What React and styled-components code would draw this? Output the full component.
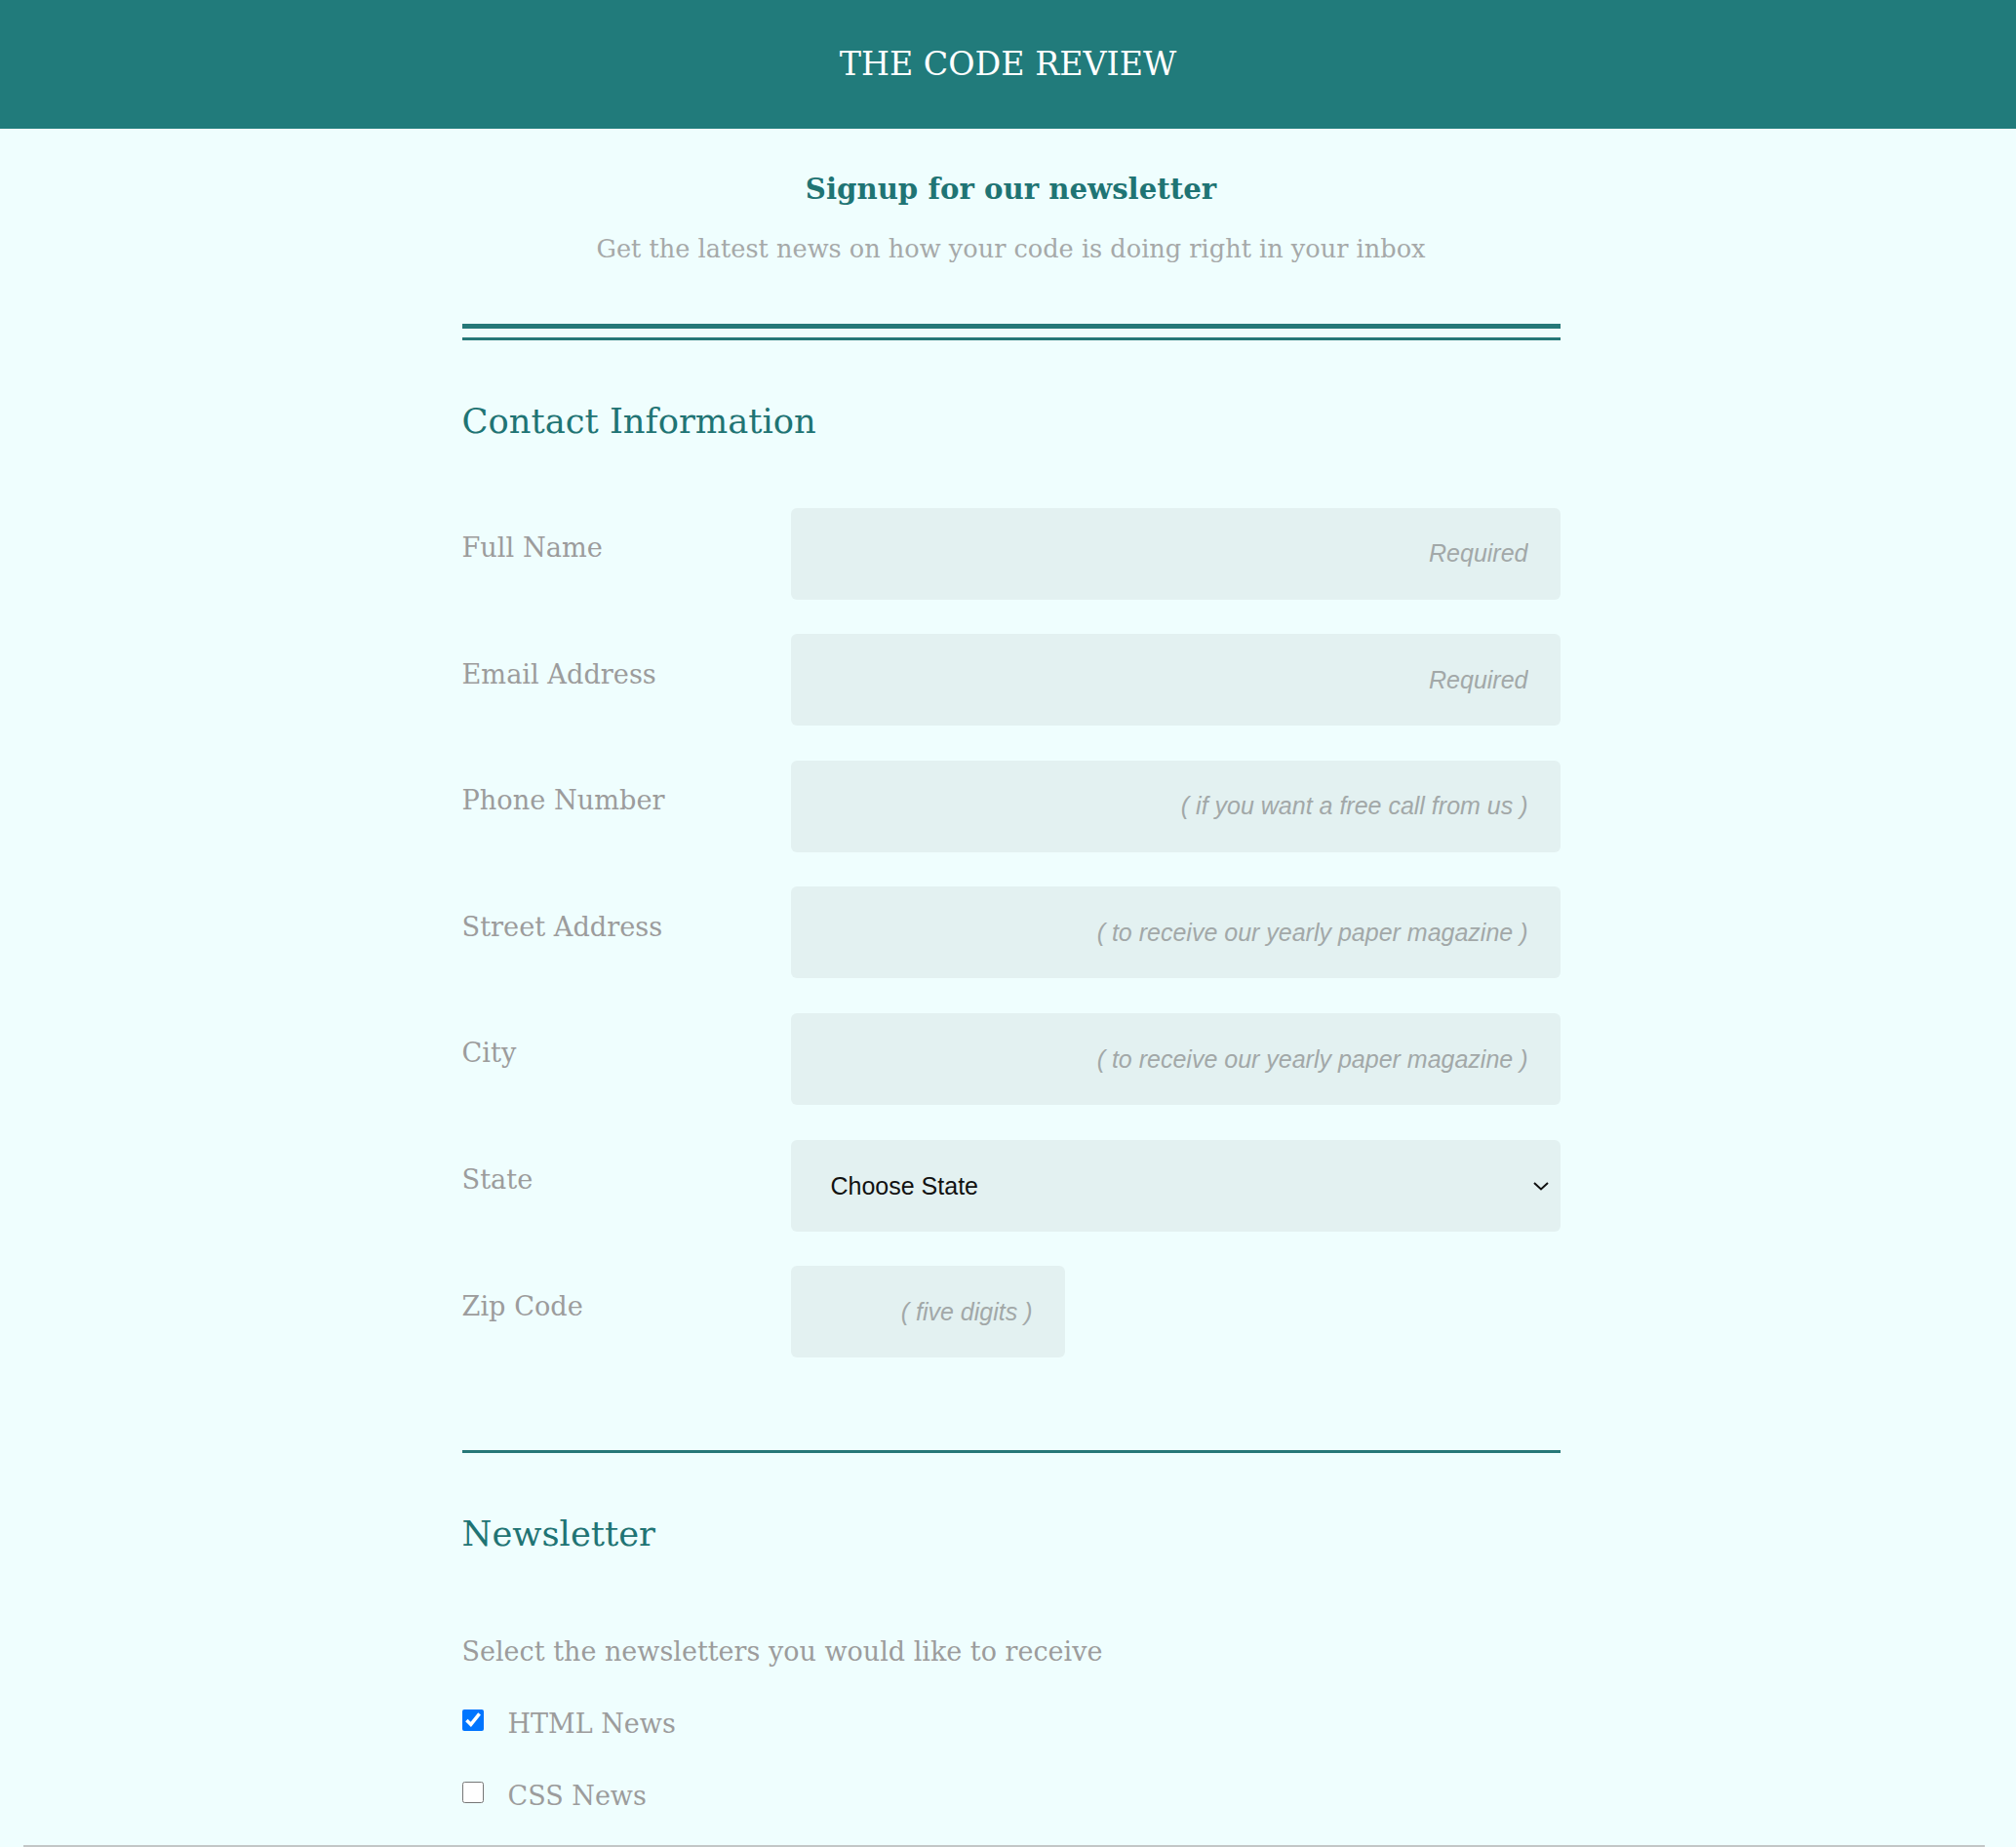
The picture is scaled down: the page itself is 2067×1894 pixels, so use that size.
import React from 'react';
import styled, { createGlobalStyle } from 'styled-components';

const GlobalStyle = createGlobalStyle`
  html, body {
    margin: 0;
    padding: 0;
    background: #effefe;
  }
  body {
    font-family: "DejaVu Serif", serif;
  }
  * { box-sizing: border-box; }
`;

const teal = '#217b7b';
const headingTeal = '#1f7474';
const gray = '#9c9c9c';

const Header = styled.header`
  height: 132px;
  background: ${teal};
  display: flex;
  align-items: center;
  justify-content: center;
`;

const SiteTitle = styled.h1`
  margin: 0;
  font-family: "DejaVu Serif", serif;
  font-size: 33.3px;
  line-height: 1;
  font-weight: 400;
  color: #ffffff;
`;

const Main = styled.main`
  width: 1126px;
  margin-left: calc(50% - 560px);
  padding-bottom: 240px;
`;

const Intro = styled.section`
  text-align: center;
  padding-top: 48.3px;
`;

const IntroTitle = styled.h2`
  margin: 0;
  font-size: 29.2px;
  line-height: 1;
  font-weight: 700;
  color: ${headingTeal};
`;

const IntroText = styled.p`
  margin: 33.8px 0 0;
  font-size: 25.6px;
  line-height: 1;
  color: #a6a9a9;
`;

const DoubleRule = styled.div`
  margin-top: 63.1px;
  height: 17px;
  border-top: 5px solid #267878;
  border-bottom: 3px solid #267878;
`;

const SingleRule = styled.hr`
  margin: ${p => p.$top}px 0 0;
  border: 0;
  border-top: 3px solid #267878;
  height: 0;
`;

const Section = styled.section`
  padding-top: 65.5px;
`;

const SectionTitle = styled.h3`
  margin: 0;
  font-size: 35.3px;
  line-height: 1;
  font-weight: 400;
  color: ${headingTeal};
`;

const Fields = styled.div`
  margin-top: 70.9px;
  display: flex;
  flex-direction: column;
  gap: 35.6px;
`;

const Row = styled.div`
  display: grid;
  grid-template-columns: 337px 1fr;
  align-items: start;
`;

const Label = styled.label`
  padding-top: 27.3px;
  font-size: 27.2px;
  line-height: 1;
  color: ${gray};
`;

const TextInput = styled.input`
  display: block;
  width: ${p => (p.$width ? `${p.$width}px` : '100%')};
  height: 94px;
  border: 0;
  border-radius: 6px;
  background: #e3f1f1;
  padding: 0 33px;
  font-family: "Liberation Sans", Arial, sans-serif;
  font-size: 25px;
  color: #222;
  text-align: right;
  outline: none;
  &::placeholder {
    color: #a2a8a8;
    font-style: italic;
  }
`;

const SelectWrap = styled.div`
  position: relative;
`;

const Select = styled.select`
  display: block;
  width: 100%;
  height: 94px;
  appearance: none;
  -webkit-appearance: none;
  border: 0;
  border-radius: 6px;
  background: #e3f1f1;
  padding: 0 60px 0 41px;
  font-family: "Liberation Sans", Arial, sans-serif;
  font-size: 25px;
  color: #111;
  outline: none;
`;

const Chevron = styled.svg`
  position: absolute;
  right: 11px;
  top: 50%;
  transform: translateY(-50%);
  pointer-events: none;
`;

const Prompt = styled.p`
  margin: 89.2px 0 0;
  font-size: 27px;
  line-height: 1;
  color: ${gray};
`;

const CheckList = styled.div`
  margin-top: 45.8px;
  display: flex;
  flex-direction: column;
  gap: 45.8px;
`;

const CheckRow = styled.label`
  display: flex;
  align-items: flex-start;
  gap: 25px;
`;

const Check = styled.input`
  width: 22px;
  height: 22px;
  margin: 0;
  flex: none;
`;

const CheckText = styled.span`
  padding-top: 1.2px;
  font-size: 27px;
  line-height: 1;
  color: ${gray};
`;

const ScrollThumb = styled.div`
  position: fixed;
  left: 24px;
  right: 32px;
  bottom: 0;
  height: 2px;
  background: #c2c6c6;
`;

const fields = [
  { label: 'Full Name', placeholder: 'Required' },
  { label: 'Email Address', placeholder: 'Required' },
  { label: 'Phone Number', placeholder: '( if you want a free call from us )' },
  { label: 'Street Address', placeholder: '( to receive our yearly paper magazine )' },
  { label: 'City', placeholder: '( to receive our yearly paper magazine )' },
];

const newsletters = [
  { label: 'HTML News', checked: true },
  { label: 'CSS News', checked: false },
];

export default function App() {
  return (
    <>
      <GlobalStyle />
      <Header>
        <SiteTitle>THE CODE REVIEW</SiteTitle>
      </Header>
      <Main>
        <Intro>
          <IntroTitle>Signup for our newsletter</IntroTitle>
          <IntroText>Get the latest news on how your code is doing right in your inbox</IntroText>
        </Intro>
        <DoubleRule />
        <Section>
          <SectionTitle>Contact Information</SectionTitle>
          <Fields>
            {fields.map(f => (
              <Row key={f.label}>
                <Label>{f.label}</Label>
                <TextInput placeholder={f.placeholder} />
              </Row>
            ))}
            <Row>
              <Label>State</Label>
              <SelectWrap>
                <Select defaultValue="">
                  <option value="">Choose State</option>
                  <option value="AL">Alabama</option>
                  <option value="CA">California</option>
                  <option value="NY">New York</option>
                  <option value="TX">Texas</option>
                </Select>
                <Chevron width="18" height="10" viewBox="0 0 18 10">
                  <path d="M2 2 L9 8.5 L16 2" fill="none" stroke="#111" strokeWidth="2" />
                </Chevron>
              </SelectWrap>
            </Row>
            <Row>
              <Label>Zip Code</Label>
              <TextInput $width={281} placeholder="( five digits )" />
            </Row>
          </Fields>
        </Section>
        <SingleRule $top={94.5} />
        <Section>
          <SectionTitle>Newsletter</SectionTitle>
          <Prompt>Select the newsletters you would like to receive</Prompt>
          <CheckList>
            {newsletters.map(n => (
              <CheckRow key={n.label}>
                <Check type="checkbox" defaultChecked={n.checked} />
                <CheckText>{n.label}</CheckText>
              </CheckRow>
            ))}
          </CheckList>
        </Section>
      </Main>
      <ScrollThumb />
    </>
  );
}
